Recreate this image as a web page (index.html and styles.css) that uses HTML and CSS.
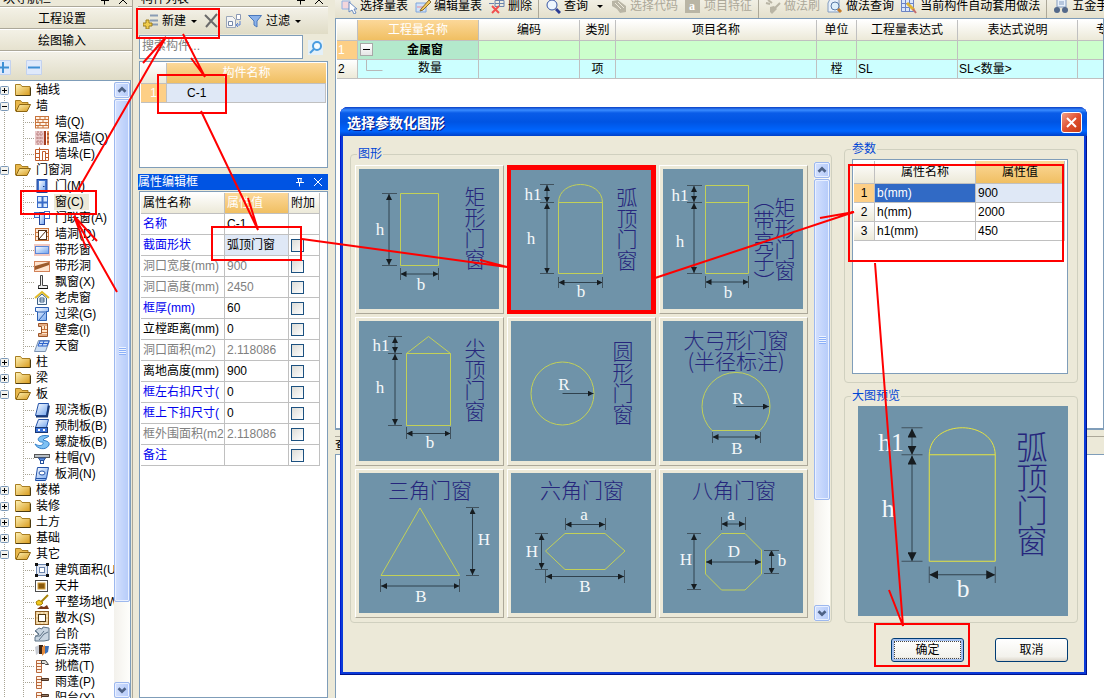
FILE: index.html
```html
<!DOCTYPE html>
<html lang="zh-CN">
<head>
<meta charset="utf-8">
<title>选择参数化图形</title>
<link rel="stylesheet" href="styles.css">
</head>
<body>
<svg class="defs" aria-hidden="true">
  <defs>
    <linearGradient id="gold" x1="0" y1="0" x2="1" y2="1"><stop offset="0" stop-color="#fff3b8"/><stop offset="1" stop-color="#d79a1c"/></linearGradient>
    <linearGradient id="sky" x1="0" y1="0" x2="1" y2="1"><stop offset="0" stop-color="#fff"/><stop offset="1" stop-color="#6fa3ee"/></linearGradient>
    <marker id="tip" viewBox="0 0 6 6" refX="6" refY="3" markerWidth="6" markerHeight="6" markerUnits="userSpaceOnUse" orient="auto-start-reverse"><path d="M0 0L6 3L0 6z" fill="#161c20"/></marker>
  </defs>
  <symbol id="plus" viewBox="0 0 9 9"><rect x=".5" y=".5" width="8" height="8" rx="1" fill="#f4f3ee" stroke="#7b98b8"/><path d="M2 4.500h5M4.500 2v5" stroke="#000"/></symbol>
  <symbol id="minus" viewBox="0 0 9 9"><rect x=".5" y=".5" width="8" height="8" rx="1" fill="#f4f3ee" stroke="#7b98b8"/><path d="M2 4.500h5" stroke="#000"/></symbol>
  <symbol id="folder" viewBox="0 0 16 16"><path d="M.5 13.500v-11h5l1.500 2h8v9z" fill="url(#gold)" stroke="#a87e22"/><path d="M1 13.500h14.500v-8" fill="none" stroke="#4b3a10"/></symbol>
  <symbol id="open" viewBox="0 0 16 16"><path d="M.5 13v-10.500h5l1.500 2h6v3" fill="#e9b84c" stroke="#a87e22"/><path d="M1 13.500l3.500-7h11l-3.500 7z" fill="url(#gold)" stroke="#8c6513"/></symbol>
  <symbol id="wall" viewBox="0 0 16 16"><path d="M1 2h14v12H1z" fill="#fff4e8"/><path d="M1 2.500h14M1 5.500h14M1 8.500h14M1 11.500h14M1 14h14M1.500 2v12M14.500 2v12M6 2v3M11 2v3M4 6v3M9 6v3M6 9v3M12 9v3M4 12v2M9 12v2" stroke="#c8743c" fill="none"/></symbol>
  <symbol id="warm" viewBox="0 0 16 16"><path d="M1 1h9v14H1z" fill="#e9c8c8"/><path d="M2 4h7M2 8h7M2 12h7M4 1v14M7 1v14" stroke="#b98080" stroke-dasharray="2 1"/><path d="M10 1h2v14h-2z" fill="#a33c20"/><path d="M13 1h2v14h-2z" fill="#e5925c"/><path d="M13 4h2M13 8h2M13 12h2" stroke="#8a3010"/></symbol>
  <symbol id="pier" viewBox="0 0 16 16"><path d="M1.500 3.500h13v11h-13zM5.500 1.500v13M8.500 5.500h3v9h-3zM1 7.500h4M1 11.500h4M12 7.500h3M12 11.500h3" fill="none" stroke="#c05c2c"/></symbol>
  <symbol id="door" viewBox="0 0 16 16"><rect x="3" y="1.500" width="10" height="13" fill="#3f74cf" stroke="#23459a"/><rect x="5" y="3" width="6" height="11" fill="url(#sky)"/><path d="M9 8.500h1.500" stroke="#1c3a80"/></symbol>
  <symbol id="window" viewBox="0 0 16 16"><rect x="3.500" y="2.500" width="10" height="11" fill="#dcecff" stroke="#3a6cc8"/><path d="M8.500 2.500v11M3.500 8.500h10" stroke="#3a6cc8" stroke-width="2"/></symbol>
  <symbol id="doorwin" viewBox="0 0 16 16"><rect x=".5" y="2.500" width="9" height="5" fill="#dcecff" stroke="#3a6cc8"/><rect x="5.500" y="2.500" width="5" height="12" fill="url(#sky)" stroke="#23459a"/><rect x="10.500" y="1.500" width="5" height="7" fill="#fff" stroke="#3a6cc8"/></symbol>
  <symbol id="wallhole" viewBox="0 0 16 16"><rect x="1.500" y="2.500" width="13" height="12" fill="#ffe9d4" stroke="#c8743c"/><path d="M1 6.500h14M1 10.500h14" stroke="#c8743c"/><rect x="4.500" y="4.500" width="8" height="9" fill="#fff" stroke="#513015"/><path d="M5 13l7-8" stroke="#513015"/></symbol>
  <symbol id="bandwin" viewBox="0 0 16 16"><rect y="2" width="16" height="12" fill="#f2c9c0"/><rect x="1.500" y="4.500" width="13" height="7" fill="url(#sky)" stroke="#5a86d8"/></symbol>
  <symbol id="bandhole" viewBox="0 0 16 16"><rect x=".5" y="3.500" width="15" height="10" fill="#ffe4cf" stroke="#d28258"/><path d="M1 12V8l14-4v3z" fill="#9c5b2c"/></symbol>
  <symbol id="bay" viewBox="0 0 16 16"><path d="M6.500 1.500h2v10h5v3h-9v-3h2z" fill="#eee" stroke="#444"/><path d="M4 14.500h10" stroke="#111"/></symbol>
  <symbol id="dormer" viewBox="0 0 16 16"><path d="M1 8l7-6 7 6" fill="none" stroke="#e2bc28" stroke-width="2"/><path d="M3.500 8v6.500h9V8L8 4z" fill="#eef6ff" stroke="#3e6184"/><path d="M6 8h4v4H6zM6 10h4" fill="none" stroke="#3e6184"/></symbol>
  <symbol id="lintel" viewBox="0 0 16 16"><path d="M1.500 1.500h13v4h-2v9h-9v-9h-2z" fill="url(#sky)" stroke="#2c60b4"/><path d="M4 6h9M5 14l6-7" stroke="#2c60b4"/></symbol>
  <symbol id="niche" viewBox="0 0 16 16"><path d="M4.500 1.500h9v13h-9v-3h3v-7h-3z" fill="#ffe6cc" stroke="#9c5326"/><path d="M5 3h8M8 7.500h5M10.500 4v4M8 10.500h5M5 13h8" stroke="#c8743c"/></symbol>
  <symbol id="skylight" viewBox="0 0 16 16"><path d="M4.500 2.500h11l-4 11H.5z" fill="#ccdff5" stroke="#7b92b0"/><path d="M6 3l9 0-2 5H4zM10 3L8 8M5 5.500h9" fill="none" stroke="#2d62cc"/></symbol>
  <symbol id="slab" viewBox="0 0 16 16"><path d="M4.500 1.500h10l-2 12H1.500z" fill="url(#sky)" stroke="#2251a8"/><path d="M2 14.500h11l2-11" fill="none" stroke="#1a3974" stroke-width="2"/></symbol>
  <symbol id="precast" viewBox="0 0 16 16"><path d="M4.500 1.500h10l-2 8H1.500z" fill="url(#sky)" stroke="#2251a8"/><rect x="1.500" y="9.500" width="12" height="5" fill="#3c73d8" stroke="#1a3974"/><path d="M4 11h2v2H4zM9 11h2v2H9z" fill="#fff"/></symbol>
  <symbol id="spiral" viewBox="0 0 16 16"><path d="M15 2C8 0 2 4 5 7c2 2 5 0 4 3-1 2-5 2-8 0 2 5 11 7 14 1 1-4-4-4-6-5 1-2 4-2 6-4z" fill="#7ec1f4" stroke="#2f7cc8"/></symbol>
  <symbol id="cap" viewBox="0 0 16 16"><rect x=".5" y="4.500" width="15" height="3" fill="#b8bec4" stroke="#555"/><path d="M4.500 8h7l-2 3H6.500z" fill="#5b8fe0" stroke="#27519c"/><rect x="6.500" y="10.500" width="3" height="3" fill="#fff" stroke="#27519c"/></symbol>
  <symbol id="slabhole" viewBox="0 0 16 16"><path d="M3.500 1.500h11l-2 11-1 2h-10z" fill="url(#sky)" stroke="#2251a8"/><ellipse cx="8" cy="7" rx="3" ry="2" fill="#fff" stroke="#2251a8"/><path d="M2 12.500h10" stroke="#2251a8" fill="none"/></symbol>
  <symbol id="area" viewBox="0 0 16 16"><rect x="2.500" y="2.500" width="11" height="11" fill="#dfe6f2" stroke="#6b84ad"/><rect x="5.500" y="5.500" width="5" height="5" fill="#fff" stroke="#6b84ad"/><path d="M1 1h3v3H1zM12 1h3v3h-3zM1 12h3v3H1zM12 12h3v3h-3z" fill="#111"/></symbol>
  <symbol id="court" viewBox="0 0 16 16"><rect x="1.500" y="2.500" width="12" height="11" fill="#fff" stroke="#4c4c4c"/><rect x="4" y="5" width="7" height="6" fill="#8a5a0c" stroke="#d4a243"/></symbol>
  <symbol id="level" viewBox="0 0 16 16"><path d="M14 1L7 8" stroke="#a88208" stroke-width="2"/><path d="M2 8l3-2 4 3-2 2H3z" fill="#f2c91c" stroke="#a88208"/><path d="M3 15l4-3 3 1 3-2 2 4z" fill="#7a3514"/></symbol>
  <symbol id="apron" viewBox="0 0 16 16"><rect x="1.500" y="1.500" width="13" height="13" fill="#eacb94" stroke="#8a5c24"/><rect x="3" y="3" width="10" height="10" fill="none" stroke="#fff1d4" stroke-dasharray="2 2"/><rect x="4.500" y="4.500" width="7" height="7" fill="#fff" stroke="#513810"/></symbol>
  <symbol id="steps" viewBox="0 0 16 16"><path d="M1 5l4-3 3 1 1-2 6 1v12l-5 1H1v-4l4-3z" fill="#c9d6e2" stroke="#5f7488"/><path d="M1 10h5l4-5M5 14l5-6 4-2M2 5l3 4" fill="none" stroke="#5f7488"/></symbol>
  <symbol id="post" viewBox="0 0 16 16"><path d="M1 5l4-2v8l-3 2z" fill="#c8ccd4"/><path d="M5 3h4v9H5z" fill="#3d2415"/><path d="M8 5l3-2v8l-3 3z" fill="#e48b3c"/><path d="M11 4h4l-1 6-3 2z" fill="#3c70b8"/></symbol>
  <symbol id="eave" viewBox="0 0 16 16"><path d="M2.500 2.500h5v12h-5zM3 5.500h4M3 8.500h4M3 11.500h4" fill="#fff1e4" stroke="#b8683c"/><path d="M7.500 2.500h4l3 4h-3l-1-1h-3z" fill="#e0ddd6" stroke="#444"/></symbol>
  <symbol id="canopy" viewBox="0 0 16 16"><path d="M2.500 2.500h5v12h-5zM3 5.500h4M3 8.500h4M3 11.500h4" fill="#fff1e4" stroke="#b8683c"/><path d="M7.500 4.500h7v2h-7z" fill="#9b7c66" stroke="#4b3324"/></symbol>
  <symbol id="pin" viewBox="0 0 10 10"><path d="M2 1.500h5M3.500 1v4.500M6 1v4.500M1 5.500h8M4.500 6v3.500" fill="none" stroke="currentColor"/></symbol>
  <symbol id="cross" viewBox="0 0 10 10"><path d="M1 1l8 8M9 1l-8 8" fill="none" stroke="currentColor"/></symbol>
  <symbol id="up" viewBox="0 0 16 16"><path d="M4 10l4-4 4 4" fill="none" stroke="#4d6185" stroke-width="3"/></symbol>
  <symbol id="down" viewBox="0 0 16 16"><path d="M4 6l4 4 4-4" fill="none" stroke="#4d6185" stroke-width="3"/></symbol>
  <symbol id="arch" viewBox="0 0 140 140">
    <g class="shape"><path d="M47.500 32.500C48 8.500 91 8.500 91.500 32.500V103.500H47.500zM47.500 32.500h44"/></g>
    <g class="dim"><path d="M36 15v17.500"/><path d="M36 33v70.500"/><path d="M47.500 112.500h44"/></g>
    <path class="tick" d="M29 14.500h14M29 32.500h14M29 103.500h14M47.500 107v11M91.500 107v11"/>
    <text class="ltr" x="22" y="30">h1</text><text class="ltr" x="20" y="74">h</text><text class="ltr" x="70" y="127">b</text>
    <text class="cap"><tspan x="116" y="35">弧</tspan><tspan x="116" y="56">顶</tspan><tspan x="116" y="77">门</tspan><tspan x="116" y="98">窗</tspan></text>
  </symbol>
</svg>

<nav class="nav">
  <header class="dock"><span>块导航栏</span><svg class="s10"><use href="#pin"/></svg><svg class="s10"><use href="#cross"/></svg></header>
  <button class="navbtn">工程设置</button>
  <button class="navbtn">绘图输入</button>
  <div class="navtools">
    <button aria-label="展开"><svg width="16" height="16"><path d="M.5 1.500h15v14H.5z" fill="#dfe9fb" stroke="#c3d2ef"/><path d="M2 8.500h12M8 3v11" stroke="#3f8fd4" stroke-width="2"/></svg></button>
    <button aria-label="折叠"><svg width="16" height="16"><path d="M.5 1.500h15v14H.5z" fill="#dfe9fb" stroke="#c3d2ef"/><path d="M2 8.500h12" stroke="#3f8fd4" stroke-width="2"/></svg></button>
  </div>
  <div class="treebox">
    <ul class="tree">
      <li><div class="node"><svg class="exp"><use href="#plus"/></svg><svg class="ico"><use href="#folder"/></svg>轴线</div></li>
      <li><div class="node"><svg class="exp"><use href="#minus"/></svg><svg class="ico"><use href="#open"/></svg>墙</div>
        <ul>
          <li><svg class="ico"><use href="#wall"/></svg>墙(Q)</li>
          <li><svg class="ico"><use href="#warm"/></svg>保温墙(Q)</li>
          <li><svg class="ico"><use href="#pier"/></svg>墙垛(E)</li>
        </ul></li>
      <li><div class="node"><svg class="exp"><use href="#minus"/></svg><svg class="ico"><use href="#open"/></svg>门窗洞</div>
        <ul>
          <li><svg class="ico"><use href="#door"/></svg>门(M)</li>
          <li><svg class="ico"><use href="#window"/></svg><span class="current">窗(C)</span></li>
          <li><svg class="ico"><use href="#doorwin"/></svg>门联窗(A)</li>
          <li><svg class="ico"><use href="#wallhole"/></svg>墙洞(D)</li>
          <li><svg class="ico"><use href="#bandwin"/></svg>带形窗</li>
          <li><svg class="ico"><use href="#bandhole"/></svg>带形洞</li>
          <li><svg class="ico"><use href="#bay"/></svg>飘窗(X)</li>
          <li><svg class="ico"><use href="#dormer"/></svg>老虎窗</li>
          <li><svg class="ico"><use href="#lintel"/></svg>过梁(G)</li>
          <li><svg class="ico"><use href="#niche"/></svg>壁龛(I)</li>
          <li><svg class="ico"><use href="#skylight"/></svg>天窗</li>
        </ul></li>
      <li><div class="node"><svg class="exp"><use href="#plus"/></svg><svg class="ico"><use href="#folder"/></svg>柱</div></li>
      <li><div class="node"><svg class="exp"><use href="#plus"/></svg><svg class="ico"><use href="#folder"/></svg>梁</div></li>
      <li><div class="node"><svg class="exp"><use href="#minus"/></svg><svg class="ico"><use href="#open"/></svg>板</div>
        <ul>
          <li><svg class="ico"><use href="#slab"/></svg>现浇板(B)</li>
          <li><svg class="ico"><use href="#precast"/></svg>预制板(B)</li>
          <li><svg class="ico"><use href="#spiral"/></svg>螺旋板(B)</li>
          <li><svg class="ico"><use href="#cap"/></svg>柱帽(V)</li>
          <li><svg class="ico"><use href="#slabhole"/></svg>板洞(N)</li>
        </ul></li>
      <li><div class="node"><svg class="exp"><use href="#plus"/></svg><svg class="ico"><use href="#folder"/></svg>楼梯</div></li>
      <li><div class="node"><svg class="exp"><use href="#plus"/></svg><svg class="ico"><use href="#folder"/></svg>装修</div></li>
      <li><div class="node"><svg class="exp"><use href="#plus"/></svg><svg class="ico"><use href="#folder"/></svg>土方</div></li>
      <li><div class="node"><svg class="exp"><use href="#plus"/></svg><svg class="ico"><use href="#folder"/></svg>基础</div></li>
      <li><div class="node"><svg class="exp"><use href="#minus"/></svg><svg class="ico"><use href="#open"/></svg>其它</div>
        <ul>
          <li><svg class="ico"><use href="#area"/></svg>建筑面积(U)</li>
          <li><svg class="ico"><use href="#court"/></svg>天井</li>
          <li><svg class="ico"><use href="#level"/></svg>平整场地(W)</li>
          <li><svg class="ico"><use href="#apron"/></svg>散水(S)</li>
          <li><svg class="ico"><use href="#steps"/></svg>台阶</li>
          <li><svg class="ico"><use href="#post"/></svg>后浇带</li>
          <li><svg class="ico"><use href="#eave"/></svg>挑檐(T)</li>
          <li><svg class="ico"><use href="#canopy"/></svg>雨蓬(P)</li>
          <li><svg class="ico"><use href="#canopy"/></svg>阳台(Y)</li>
        </ul></li>
    </ul>
    <div class="scroll"><button aria-label="向上滚动"><svg><use href="#up"/></svg></button><div class="thumb long"><i></i></div><span class="rest"></span><button aria-label="向下滚动"><svg><use href="#down"/></svg></button></div>
  </div>
</nav>

<section class="side">
  <header class="dock"><span>构件列表</span><svg class="s10"><use href="#pin"/></svg><svg class="s10"><use href="#cross"/></svg></header>
  <div class="sidetools">
    <button><svg class="ico"><path d="M7 2.500h8M7 7.500h8M7 11.500h8" stroke="#8a9cb4" stroke-width="2"/><path d="M0 10h3V7h3v3h3v3H6v3H3v-3H0z" fill="#f0cc4c" stroke="#9c7c1c"/></svg>新建<svg class="caret"><path d="M0 0h6L3 3z"/></svg></button>
    <button aria-label="删除"><svg class="ico"><path d="M2 2l12 12M14 1L3 14" stroke="#6b6b6b" stroke-width="2"/></svg></button>
    <button aria-label="复制"><svg class="ico"><path d="M1.500 3.500h6l3 3v8h-9z" fill="#f4f4f4" stroke="#9aa6ba"/><path d="M3.500 8.500h4v4h-4z" fill="#fff" stroke="#7688a8"/><path d="M11.500 1.500h4v5h-4z" fill="#fff" stroke="#8b98b4"/><path d="M15 8v4h-3M13 10l-2 2 2 2" fill="none" stroke="#5c83d4"/></svg></button>
    <button><svg class="ico"><path d="M1.500 2.500h13L10 8v6l-3-2V8z" fill="#8bb2ea" stroke="#4a78bc"/></svg>过滤<svg class="caret"><path d="M0 0h6L3 3z"/></svg></button>
  </div>
  <div class="search"><input type="text" placeholder="搜索构件..." aria-label="搜索构件"><button aria-label="搜索"><svg width="15" height="15"><rect width="15" height="15" fill="#e4f0f8"/><circle cx="9" cy="6" r="4" fill="#f5fbff" stroke="#4a9ce0" stroke-width="2"/><path d="M6 9l-4 4" stroke="#4a9ce0" stroke-width="2"/></svg></button></div>
  <div class="box list">
    <table class="grid">
      <colgroup><col class="w25"><col></colgroup>
      <thead><tr><th></th><th class="hot">构件名称</th></tr></thead>
      <tbody><tr><td class="num on">1</td><td class="pick name">C-1</td></tr></tbody>
    </table>
  </div>
  <header class="bar"><span>属性编辑框</span><svg class="s10"><use href="#pin"/></svg><svg class="s10"><use href="#cross"/></svg></header>
  <div class="box props">
    <table class="grid">
      <colgroup><col class="w84"><col class="w64"><col class="w31"></colgroup>
      <thead><tr><th>属性名称</th><th class="hot">属性值</th><th>附加</th></tr></thead>
      <tbody>
        <tr><td class="key">名称</td><td>C-1</td><td></td></tr>
        <tr><td class="key">截面形状</td><td class="pick">弧顶门窗</td><td><input type="checkbox" aria-label="截面形状 附加"></td></tr>
        <tr class="dimmed"><td>洞口宽度(mm)</td><td>900</td><td><input type="checkbox" aria-label="洞口宽度 附加"></td></tr>
        <tr class="dimmed"><td>洞口高度(mm)</td><td>2450</td><td><input type="checkbox" aria-label="洞口高度 附加"></td></tr>
        <tr><td class="key">框厚(mm)</td><td>60</td><td><input type="checkbox" aria-label="框厚 附加"></td></tr>
        <tr><td>立樘距离(mm)</td><td>0</td><td><input type="checkbox" aria-label="立樘距离 附加"></td></tr>
        <tr class="dimmed"><td>洞口面积(m2)</td><td>2.118086</td><td><input type="checkbox" aria-label="洞口面积 附加"></td></tr>
        <tr><td>离地高度(mm)</td><td>900</td><td><input type="checkbox" aria-label="离地高度 附加"></td></tr>
        <tr><td class="key">框左右扣尺寸(</td><td>0</td><td><input type="checkbox" aria-label="框左右扣尺寸 附加"></td></tr>
        <tr><td class="key">框上下扣尺寸(</td><td>0</td><td><input type="checkbox" aria-label="框上下扣尺寸 附加"></td></tr>
        <tr class="dimmed"><td>框外围面积(m2</td><td>2.118086</td><td><input type="checkbox" aria-label="框外围面积 附加"></td></tr>
        <tr><td class="key">备注</td><td></td><td><input type="checkbox" aria-label="备注 附加"></td></tr>
      </tbody>
    </table>
  </div>
</section>

<main class="main">
  <div class="maintools"><div class="row">
    <button><svg class="ico"><path d="M1 3h8v8H1z" fill="#f3d6dc" stroke="#8fb2e4"/><path d="M8 4v10l3-2 2 4 2-1-2-4h3z" fill="#fff" stroke="#6b8cc0"/></svg>选择量表</button>
    <button><svg class="ico"><path d="M1 5h10v9H1z" fill="#cfe1f8" stroke="#7fa6de"/><path d="M2 9h8" stroke="#e48b9b"/><path d="M6 11l8-9 2 2-8 8-3 1z" fill="#f3c95c" stroke="#8a6a2c"/></svg>编辑量表</button>
    <button><svg class="ico"><path d="M6 2.500h9v6H6zM6 5.500h9M10.500 2v6M0 5.500h5" fill="none" stroke="#6b84ad"/><path d="M3 8l7 7M10 8l-7 7" stroke="#f05050" stroke-width="2"/></svg>删除</button>
    <span class="sep"></span>
    <button><svg class="ico"><circle cx="7" cy="7" r="5" fill="#eef6ff" stroke="#3554a4"/><path d="M11 11l4 4" stroke="#2c3c94" stroke-width="3"/></svg>查询<svg class="caret"><path d="M0 0h6L3 3z"/></svg></button>
    <button class="off"><svg class="ico"><path d="M1 3l6-1 8 6 0 6-6 1-3-4-5-3z" fill="#b9b5a5"/><path d="M4 5l6 6M7 4l6 6" stroke="#eeeadc"/></svg>选择代码</button>
    <button class="off"><svg class="ico"><rect width="15" height="15" fill="#b9b5a5"/><text x="4" y="12" class="a">a</text></svg>项目特征</button>
    <span class="sep"></span>
    <button class="off"><svg class="ico"><path d="M1 5l4 1M3 2l4 3M15 5l-5 5" fill="none" stroke="#b9b5a5" stroke-width="2"/><path d="M5 9l4-1 3 3-5 5-2-2z" fill="#b9b5a5"/></svg>做法刷</button>
    <button><svg class="ico"><path d="M3 1h9v13H1V5z" fill="#e8f1fb" stroke="#839cc0"/><circle cx="8" cy="8" r="4" fill="#dff0fc" stroke="#5a7ba8"/><path d="M11 11l3 3" stroke="#c47c2c" stroke-width="3"/></svg>做法查询</button>
    <button><svg class="ico"><path d="M.5 1.500h12v12H.5zM.5 5.500h12M.5 9.500h12M4.500 1v12M8.500 1v12" fill="#dbe7fb" stroke="#6b83c4"/><path d="M6 5l7 7" stroke="#e0b434" stroke-width="3"/><path d="M12 11l3 4" stroke="#c46c6c" stroke-width="2"/></svg>当前构件自动套用做法</button>
    <span class="sep"></span>
    <button><svg class="ico"><path d="M4 1h9v8H4z" fill="#e8f1fb" stroke="#839cc0"/><path d="M6 4h5M6 6h5" stroke="#839cc0"/><circle cx="4" cy="12" r="3" fill="#53698a"/><circle cx="12" cy="12" r="3" fill="#53698a"/></svg>五金手册</button>
  </div></div>
  <div class="qty">
    <table class="grid">
      <colgroup><col class="w21"><col class="w121"><col class="w101"><col class="w36"><col class="w201"><col class="w40"><col class="w101"><col class="w120"><col class="w61"></colgroup>
      <thead><tr><th></th><th class="hot">工程量名称</th><th>编码</th><th>类别</th><th>项目名称</th><th>单位</th><th>工程量表达式</th><th>表达式说明</th><th>专业</th></tr></thead>
      <tbody>
        <tr class="green"><td class="num on">1</td><td class="group"><button class="fold" aria-label="折叠"><svg width="11" height="11"><path d="M2 5.500h7" stroke="#000"/></svg></button><b>金属窗</b></td><td></td><td></td><td></td><td></td><td></td><td></td><td></td></tr>
        <tr class="cyan"><td class="num">2</td><td class="leaf"><svg class="elbow"><path d="M.5 0v10.500h16" fill="none" stroke="#b8b8b8"/></svg><span>数量</span></td><td></td><td class="mid">项</td><td></td><td class="mid">樘</td><td>SL</td><td>SL&lt;数量&gt;</td><td></td></tr>
      </tbody>
    </table>
  </div>
  <div class="lower"><span>查</span></div>
  <div class="blank"></div>
</main>

<section class="dialog" role="dialog" aria-labelledby="dlg-title">
  <header class="title"><h1 id="dlg-title">选择参数化图形</h1><button class="close" aria-label="关闭"><svg width="19" height="19"><path d="M5 5l9 9M14 5l-9 9" stroke="#fff" stroke-width="2"/></svg></button></header>
  <div class="content">
    <div class="columns">
      <fieldset class="shapes"><legend>图形</legend>
        <div class="cards">
          <button class="card" aria-label="矩形门窗"><svg viewBox="0 0 140 140">
            <g class="shape"><path d="M41.500 24.500h38v72h-38z"/></g>
            <g class="dim"><path d="M30 25v71"/><path d="M41.500 105h38"/></g>
            <path class="tick" d="M23 24.500h15M23 96.500h15M41.500 99v12M79.500 99v12"/>
            <text class="ltr" x="21" y="66">h</text><text class="ltr" x="62" y="121">b</text>
            <text class="cap"><tspan x="116" y="35">矩</tspan><tspan x="116" y="56">形</tspan><tspan x="116" y="77">门</tspan><tspan x="116" y="98">窗</tspan></text></svg></button>
          <button class="card chosen" aria-label="弧顶门窗"><svg><use href="#arch"/></svg></button>
          <button class="card" aria-label="矩形门窗(带亮子)"><svg viewBox="0 0 140 140">
            <g class="shape"><path d="M42.500 16.500h43v88h-43zM42.500 33.500h43"/></g>
            <g class="dim"><path d="M31 17v16"/><path d="M31 34v70"/><path d="M42.500 113h43"/></g>
            <path class="tick" d="M24 16.500h15M24 33.500h15M24 104.500h15M42.500 107v12M85.500 107v12"/>
            <text class="ltr" x="17" y="32">h1</text><text class="ltr" x="17" y="78">h</text><text class="ltr" x="65" y="129">b</text>
            <text class="cap"><tspan x="122" y="46">矩</tspan><tspan x="122" y="67">形</tspan><tspan x="122" y="88">门</tspan><tspan x="122" y="109">窗</tspan><tspan x="101" y="38">︵</tspan><tspan x="101" y="59">带</tspan><tspan x="101" y="80">亮</tspan><tspan x="101" y="100">子</tspan><tspan x="101" y="120">︶</tspan></text></svg></button>
          <button class="card" aria-label="尖顶门窗"><svg viewBox="0 0 140 140">
            <g class="shape"><path d="M47.500 32.500L69.500 15.500L91.500 32.500V104.500H47.500zM47.500 32.500h44"/></g>
            <g class="dim"><path d="M36 16v16"/><path d="M36 33v71"/><path d="M47.500 112.500h44"/></g>
            <path class="tick" d="M29 15.500h14M29 32.500h14M29 104.500h14M47.500 106v12M91.500 106v12"/>
            <text class="ltr" x="22" y="30">h1</text><text class="ltr" x="21" y="72">h</text><text class="ltr" x="71" y="127">b</text>
            <text class="cap"><tspan x="116" y="35">尖</tspan><tspan x="116" y="56">顶</tspan><tspan x="116" y="77">门</tspan><tspan x="116" y="98">窗</tspan></text></svg></button>
          <button class="card" aria-label="圆形门窗"><svg viewBox="0 0 140 140">
            <g class="shape"><circle cx="51.500" cy="72.500" r="31.500"/></g>
            <path class="ray" d="M51.500 72.500h31"/>
            <text class="ltr" x="53" y="69">R</text>
            <text class="cap"><tspan x="112" y="38">圆</tspan><tspan x="112" y="59">形</tspan><tspan x="112" y="80">门</tspan><tspan x="112" y="101">窗</tspan></text></svg></button>
          <button class="card" aria-label="大弓形门窗(半径标注)"><svg viewBox="0 0 140 140">
            <g class="shape"><path d="M49 109.500A34 34 0 1 1 97 109.500z"/></g>
            <path class="ray" d="M73 85.500h33"/>
            <g class="dim"><path d="M49.500 116h48"/></g><path class="tick" d="M49.500 111v11M97.500 111v11"/>
            <text class="ltr" x="75" y="83">R</text><text class="ltr" x="74" y="133">B</text>
            <text class="cap"><tspan x="73" y="27">大弓形门窗</tspan><tspan x="73" y="48">(半径标注)</tspan></text></svg></button>
          <button class="card" aria-label="三角门窗"><svg viewBox="0 0 140 140">
            <g class="shape"><path d="M61 35L100.500 102.500H22z"/></g>
            <g class="dim"><path d="M113.500 35v67"/><path d="M22 113h78.500"/></g>
            <path class="tick" d="M107 34.500h13M107 102.500h13M21.500 106v13M100.500 106v13"/>
            <text class="ltr" x="125" y="72">H</text><text class="ltr" x="62" y="129">B</text>
            <text class="cap" x="71" y="25">三角门窗</text></svg></button>
          <button class="card" aria-label="六角门窗"><svg viewBox="0 0 140 140">
            <g class="shape"><path d="M54 60.500H94L114 78L94 96.500H54L34.500 78z"/></g>
            <g class="dim"><path d="M54.500 51.500h39.500"/><path d="M30.500 61v35"/><path d="M35 103.500h78"/></g>
            <path class="tick" d="M54.500 45v12M94.500 45v12M24 60.500h13M24 96.500h13M34.500 97v13M113.500 97v13"/>
            <text class="ltr" x="73" y="47">a</text><text class="ltr" x="21" y="84">H</text><text class="ltr" x="74" y="119">B</text>
            <text class="cap" x="71" y="25">六角门窗</text></svg></button>
          <button class="card" aria-label="八角门窗"><svg viewBox="0 0 140 140">
            <g class="shape"><path d="M58.500 60.500H82L98.500 77V101L82 117H58.500L42.500 101V77z"/></g>
            <g class="dim"><path d="M58.500 51h23.500"/><path d="M43 89h55"/><path d="M31 61v56"/><path d="M108.500 77v24"/></g>
            <path class="tick" d="M58.500 44v13M82.500 44v13M24 60.500h14M24 116.500h14M101 77.500h15M101 100.500h15"/>
            <text class="ltr" x="68" y="47">a</text><text class="ltr" x="71" y="84">D</text><text class="ltr" x="23" y="92">H</text><text class="ltr" x="119" y="93">b</text>
            <text class="cap" x="71" y="25">八角门窗</text></svg></button>
        </div>
        <div class="scroll"><button aria-label="向上滚动"><svg><use href="#up"/></svg></button><div class="thumb short"><i></i></div><span class="rest"></span><button aria-label="向下滚动"><svg><use href="#down"/></svg></button></div>
      </fieldset>
      <div class="right">
        <fieldset class="params"><legend>参数</legend>
          <div class="box">
            <table class="grid">
              <colgroup><col class="w21"><col class="w101"><col></colgroup>
              <thead><tr><th></th><th>属性名称</th><th class="hot ink">属性值</th></tr></thead>
              <tbody>
                <tr><td class="num on ink">1</td><td class="sel">b(mm)</td><td class="pick">900</td></tr>
                <tr><td class="num">2</td><td>h(mm)</td><td>2000</td></tr>
                <tr><td class="num">3</td><td>h1(mm)</td><td>450</td></tr>
              </tbody>
            </table>
          </div>
        </fieldset>
        <fieldset class="preview"><legend>大图预览</legend><svg><use href="#arch"/></svg></fieldset>
      </div>
    </div>
    <footer class="actions"><button class="ok">确定</button><button>取消</button></footer>
  </div>
</section>

<svg class="marks" width="1104" height="698" aria-hidden="true">
  <path d="M137 9h82v29h-82zM158 75h68v38h-68zM21 191h75v23H21zM212 227h89v33h-89zM849 165h214v96H849zM875 624h94v42h-94z"/>
  <path d="M143 63L166 37L78 190M191 58L205 77L183 34M201 111L258 230L248 198M97 241L74 216L86 248M74 216L117 292M302 239L507 267L480 260M655 278L854 212L820 218M875 263L903 626L889 590"/>
</svg>
</body>
</html>
```
FILE: styles.css
```css
* { box-sizing: border-box; }
body {
  margin: 0;
  display: flex;
  height: 100vh;
  overflow: hidden;
  position: relative;
  background: #ece9d8;
  color: #000;
  font: 12px/16px "Liberation Sans", "Noto Sans CJK SC", sans-serif;
}
button { font: inherit; color: inherit; background: none; border: 0; padding: 0; margin: 0; }
svg { display: block; flex: none; }
ul { list-style: none; margin: 0; padding: 0; }
.defs { position: absolute; width: 0; height: 0; }
.ico { width: 16px; height: 16px; }
.s10 { width: 10px; height: 10px; }
.caret { width: 6px; height: 3px; margin-left: 2px; }

/* dock captions */
.dock {
  display: flex;
  align-items: flex-end;
  height: 7px;
  overflow: hidden;
  padding: 0 4px 0 3px;
  gap: 8px;
  border-bottom: 1px solid #aca899;
  flex: none;
}
.dock span { flex: 1; line-height: 14px; }
.dock .s10 { margin-bottom: 1px; }

/* left navigation */
.nav { width: 133px; flex: none; display: flex; flex-direction: column; border-right: 1px solid #aca899; }
.navbtn {
  height: 22px;
  flex: none;
  padding: 2px 8px 0 0;
  background: linear-gradient(#f3f1e6, #e6e2cf);
  border-top: 1px solid #fff;
  border-bottom: 1px solid #aca899;
}
.navtools {
  display: flex;
  gap: 15px;
  height: 29px;
  flex: none;
  align-items: center;
  padding-top: 1px;
  margin-left: -5px;
  background: linear-gradient(#f3f1e8, #e0dcc6);
  border-top: 1px solid #fff;
}
.treebox {
  flex: 1;
  min-height: 0;
  display: flex;
  margin-right: 1px;
  background: #fff;
  border: solid #7f9db9;
  border-width: 1px 1px 0 0;
  padding-top: 1px;
}
.tree {
  flex: 1;
  min-width: 0;
  overflow: hidden;
  white-space: nowrap;
  background: repeating-linear-gradient(#a8a494 0 1px, transparent 1px 2px) 4px 8px / 1px 100% no-repeat;
}
.node, .tree ul li { display: flex; align-items: center; height: 16px; }
.node .exp { width: 9px; height: 9px; }
.node .ico { margin: 0 5px 0 6px; }
.tree ul { padding-left: 23px; background: repeating-linear-gradient(#a8a494 0 1px, transparent 1px 2px) 23px 0 / 1px 100% no-repeat; }
.tree ul li { padding-left: 11px; background: repeating-linear-gradient(90deg, #a8a494 0 1px, transparent 1px 2px) 0 8px / 11px 1px no-repeat; }
.tree ul li .ico { margin-right: 5px; }
.current { background: #ece9d8; padding: 0 5px 0 1px; margin-left: -1px; }

.scroll { width: 16px; flex: none; display: flex; flex-direction: column; background: linear-gradient(90deg, #f3f1ec, #fefefb); }
.scroll button, .thumb {
  border: 1px solid #9db8ee;
  border-radius: 2px;
  background: linear-gradient(90deg, #d3e0fe, #b5cbf9);
  box-shadow: inset 0 0 0 1px #e9f0ff;
}
.scroll button { height: 16px; flex: none; }
.scroll button svg { width: 14px; height: 14px; }
.thumb { margin: 1px 0; display: flex; align-items: center; justify-content: center; }
.thumb i { width: 7px; height: 8px; background: repeating-linear-gradient(#eef4fe 0 1px, #8cb0f8 1px 2px); }
.thumb.long { flex: 504; }
.thumb.long + .rest { flex: 79; }
.thumb.short { flex: 319; }
.thumb.short + .rest { flex: 104; }

/* component list and property editor */
.side { width: 202px; flex: none; display: flex; flex-direction: column; padding: 0 7px 0 5px; }
.sidetools {
  display: flex;
  align-items: center;
  gap: 6px;
  height: 27px;
  padding-left: 5px;
  background: linear-gradient(#f3f1e8, #e0dcc6);
  border-top: 1px solid #fff;
}
.sidetools button { display: flex; align-items: center; gap: 3px; }
.search { display: flex; align-items: center; gap: 5px; margin-top: 1px; }
.search input {
  flex: 1;
  min-width: 0;
  margin-left: 1px;
  height: 24px;
  border: 1px solid #7f9db9;
  background: #fff;
  padding: 0 2px 3px;
  font: inherit;
}
.search input::placeholder { color: #808080; opacity: 1; }
.search button { margin-right: 5px; }
.box { background: #fff; border: 1px solid #7f9db9; padding: 1px 0 0 1px; overflow: hidden; }
.list { height: 107px; margin: 2px 0 6px 1px; padding-right: 1px; }
.bar { display: flex; align-items: center; gap: 8px; height: 16px; background: #0054e3; color: #fff; padding-right: 5px; }
.bar span { flex: 1; }
.props { flex: 1; margin: 1px 0 0 1px; }
.props .grid { width: 179px; }

.grid { width: 100%; table-layout: fixed; border-collapse: separate; border-spacing: 0; }
.grid th, .grid td {
  height: 19px;
  padding: 0 2px;
  border: solid #c0c0c0;
  border-width: 0 1px 1px 0;
  white-space: nowrap;
  overflow: hidden;
  font-weight: normal;
  text-align: left;
}
.grid th { height: 21px; background: linear-gradient(#fff, #ece9d8); text-align: center; }
.grid .hot { background: linear-gradient(#fcd899, #f0bf62); color: #fff; }
.grid .ink { color: #000; }
.grid .num { background: linear-gradient(#fff, #ece9d8); }
.grid .num.on { background: #fdcf86; color: #fff; }
.grid .num.ink { color: #000; }
.grid .pick { background: #dfe8f6; }
.grid .sel { background: #316ac5; color: #fff; }
.list .num { text-align: center; }
.list .name { padding-left: 20px; }
.list .hot { border-right: 0; }
.props .grid th, .props .grid td { height: 21px; }
.props .grid th { text-align: left; }
.props .key { color: #0000f0; }
.dimmed { color: #808080; }
.props input {
  appearance: none;
  display: block;
  width: 13px;
  height: 13px;
  margin: 0;
  border: 1px solid #1c5180;
  background: linear-gradient(135deg, #dcdcd7, #fff);
}
.w21 { width: 21px; } .w25 { width: 26px; } .w31 { width: 31px; } .w36 { width: 36px; }
.w40 { width: 40px; } .w61 { width: 61px; } .w64 { width: 64px; } .w84 { width: 84px; }
.w101 { width: 101px; } .w120 { width: 120px; } .w121 { width: 121px; } .w201 { width: 201px; }

/* quantity table */
.main { flex: 1; min-width: 0; display: flex; flex-direction: column; overflow: hidden; }
.maintools { height: 18px; flex: none; overflow: hidden; background: linear-gradient(#f1efe4, #e4e0cc); }
.row { display: flex; align-items: center; gap: 7px; height: 24px; margin-top: -6px; padding-left: 6px; white-space: nowrap; }
.row button { display: flex; align-items: center; gap: 3px; flex: none; }
.row .caret { margin: 0 1px 0 6px; }
.row .off { color: #aca899; }
.sep { width: 1px; height: 24px; background: #aca899; flex: none; margin: 0 -1px; }
.a { font: bold 12px "Liberation Serif", serif; fill: #fff; }
.qty { height: 411px; flex: none; overflow: hidden; background: #fff; border: 1px solid #7f9db9; padding: 1px 0 0 1px; }
.qty .grid { width: 802px; }
.qty .grid td { padding: 0 1px; }
.grid td.mid { text-align: center; }
.green td { background: #ccffcc; }
.cyan td { background: #ccffff; }
.grid .group { background: #b3e9cc; text-align: center; }
.group .fold { float: left; width: 13px; height: 13px; margin: 1px 0 0 1px; border: 1px solid #a8a8a8; background: linear-gradient(#fff, #e6e6e6); }
.leaf .elbow { float: left; width: 17px; height: 18px; margin-left: 7px; }
.grid .leaf { text-align: center; }
.lower { height: 26px; flex: none; padding: 6px 0 0; border: solid #7f9db9; border-width: 1px 0; overflow: hidden; }
.lower span { display: block; border-top: 1px solid #aca899; }
.blank { flex: 1; background: #fff; border-left: 1px solid #7f9db9; }

/* dialog window */
.dialog {
  position: absolute;
  left: 340px;
  top: 107px;
  width: 747px;
  padding: 0 3px 3px;
  border-radius: 8px 8px 0 0;
  background: #0a3ad8;
  box-shadow: inset -1px -1px #00138c, inset 1px 0 #0019cf;
}
.title {
  display: flex;
  align-items: center;
  justify-content: space-between;
  height: 29px;
  margin: 0 -3px;
  padding: 2px 5px 0 7px;
  border-radius: 8px 8px 0 0;
  background: linear-gradient(#0a3fc4, #3a8cff 3px, #0a5ce8 6px, #0054e3 15px, #0066ff 24px, #0040c8);
}
.title h1 { margin: 0; font-size: 14px; line-height: 20px; font-weight: bold; color: #fff; text-shadow: 1px 1px #0a1883; }
.close { width: 21px; height: 21px; border: 1px solid #fff; border-radius: 3px; background: linear-gradient(135deg, #f0a088, #e05030 50%, #c83c14); }
.content { background: #ece9d8; padding: 6px 6px 10px 7px; }
.columns { display: flex; gap: 12px; align-items: stretch; }
fieldset { margin: 0; border: 1px solid #d0d0bf; border-radius: 4px; min-width: 0; }
legend { margin-left: 2px; padding: 0 1px; line-height: 14px; color: #0046d5; }
.shapes { flex: 1; margin-top: 5px; padding: 1px 1px 1px 4px; display: flex; justify-content: space-between; }
.cards { display: grid; grid-template-columns: repeat(3, 149px); gap: 3px; padding: 3px 0; }
.card { width: 149px; height: 149px; padding: 3px 4px 4px 3px; border: 1px solid; border-color: #fff #aca899 #aca899 #fff; }
.card svg { width: 140px; height: 140px; background: #6f93a9; }
.card.chosen { border: 0; padding: 4px; background: #f00; }
.right { width: 234px; flex: none; display: flex; flex-direction: column; gap: 6px; }
.params { padding: 3px 9px 8px 7px; }
.params .box { height: 215px; padding-right: 2px; }
.params .grid .num { text-align: center; }
.params .grid th { height: 23px; }
.params legend, .preview legend { margin-left: -1px; }
.preview { padding: 3px 9px 6px 7px; --edge: #e6e440; }
.preview svg { width: 210px; height: 210px; margin-left: auto; background: #6f93a9; }
.shape * { fill: none; stroke: var(--edge, #c2d058); vector-effect: non-scaling-stroke; }
.dim path, .ray { fill: none; stroke: #30424e; marker-end: url(#tip); vector-effect: non-scaling-stroke; }
.dim path { marker-start: url(#tip); }
.tick { fill: none; stroke: #40525e; vector-effect: non-scaling-stroke; }
.ltr { font: 17px "Liberation Serif", serif; fill: #f4f8fa; text-anchor: middle; }
.cap { font: 300 21px "Noto Sans CJK SC", sans-serif; fill: #26267c; text-anchor: middle; }
.actions { display: flex; justify-content: flex-end; gap: 31px; margin: 15px 10px 0 0; }
.actions button {
  width: 73px;
  height: 24px;
  border: 1px solid #003c74;
  border-radius: 3px;
  background: linear-gradient(#fff, #f3f2ec 80%, #dcd6ca);
}
.actions .ok { box-shadow: inset 0 0 0 2px #a4c0f0; outline: 1px dotted #444; outline-offset: -4px; }

/* red guide marks over the windows */
.marks { position: absolute; left: 0; top: 0; pointer-events: none; }
.marks path { fill: none; stroke: #f00; stroke-width: 2px; }
```
